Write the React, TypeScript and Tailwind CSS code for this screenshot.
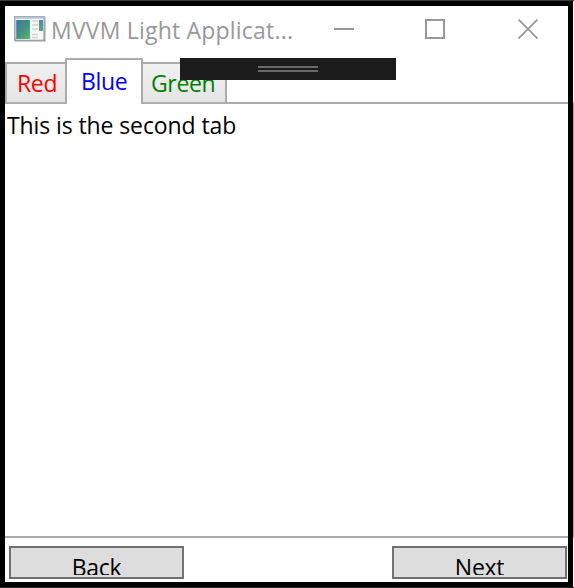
import React from 'react';

function AppIcon() {
  return (
    <svg width="32" height="26" viewBox="0 0 32 26" className="shrink-0">
      <defs>
        <linearGradient id="pane" x1="0" y1="0" x2="1" y2="1">
          <stop offset="0" stopColor="#4377a8" />
          <stop offset="0.5" stopColor="#439082" />
          <stop offset="1" stopColor="#5fb866" />
        </linearGradient>
        <linearGradient id="side" x1="0" y1="0" x2="0" y2="1">
          <stop offset="0" stopColor="#4c84bd" />
          <stop offset="1" stopColor="#5aac74" />
        </linearGradient>
        <linearGradient id="frame" x1="0" y1="0" x2="0" y2="1">
          <stop offset="0" stopColor="#a3b0bf" />
          <stop offset="1" stopColor="#9ba1a6" />
        </linearGradient>
      </defs>
      <rect x="0.75" y="0.75" width="29.5" height="23.5" fill="#e2e6ea" stroke="url(#frame)" strokeWidth="1.5" />
      <rect x="1" y="1" width="29.5" height="1.6" fill="#b9c4d2" />
      <rect x="2" y="3" width="27" height="20.5" fill="#f6f7f8" />
      <rect x="2.2" y="4" width="13.8" height="19" fill="url(#pane)" />
      <path d="M18 5h6M18 9h6M18 13h6M18 18.5h6M18 21.5h6" stroke="#cfd3d7" strokeWidth="1.7" />
      <rect x="25" y="4" width="4" height="11" fill="url(#side)" />
      <path d="M1 25.5h31M31.5 1v25" stroke="#cfcfcf" />
    </svg>
  );
}

function TitleBar() {
  return (
    <header className="flex h-[52px] shrink-0 items-start pl-[9px] pt-[10px] text-[#999999]">
      <AppIcon />
      <h1 className="-mt-px ml-[5px] w-[260px] whitespace-nowrap text-[23px] leading-[30px] tracking-[0.2px]">MVVM Light Applicat...</h1>
      <div className="ml-[23px] mt-[3px] flex gap-[71px]">
        <svg width="20" height="20" className="block">
          <path d="M0 10h20" stroke="currentColor" strokeWidth="2" />
        </svg>
        <svg width="20" height="20" className="block">
          <path d="M1 1h18v18H1z" fill="none" stroke="currentColor" strokeWidth="2" />
        </svg>
        <svg width="20" height="20" className="ml-[2px] block">
          <path d="M.5.5l19 19M19.5.5l-19 19" stroke="currentColor" strokeWidth="1.8" />
        </svg>
      </div>
    </header>
  );
}

function DebugBar() {
  return (
    <div className="absolute left-[175px] top-[52px] z-20 flex h-[22px] w-[216px] flex-col items-center gap-[2px] bg-[#1b1b1b] pt-[8px]">
      <span className="h-[2px] w-[60px] bg-[#686868]" />
      <span className="h-[2px] w-[60px] bg-[#686868]" />
    </div>
  );
}

const tab = 'border-2 border-[#acacac] text-[23px] leading-[30px] whitespace-nowrap tracking-[-0.35px]';
const idle = 'h-[42px] bg-linear-to-b from-[#f0f0f0] to-[#e5e5e5] pt-[4px]';

function Tabs() {
  return (
    <nav className="flex h-[46px] shrink-0 items-end bg-[linear-gradient(#acacac,#acacac)] bg-[length:100%_2px] bg-bottom bg-no-repeat">
      <div className={`${tab} ${idle} w-[62px] pl-[10px] text-[#ff0000]`}>Red</div>
      <div className={`${tab} z-10 -mx-[2px] h-[46px] w-[78px] border-b-0 bg-white pl-[14px] pt-[6px] text-[#0000ff]`}>Blue</div>
      <div className={`${tab} ${idle} w-[86px] pl-[8px] text-[#008000]`}>Green</div>
    </nav>
  );
}

function Button({ label }: { label: string }) {
  return (
    <button className="flex h-[33px] w-[175px] justify-center border-2 border-[#707070] bg-[#dddddd] pt-[4px] text-[23px] leading-[30px] tracking-[-0.3px]">
      <span className="h-[23px] overflow-hidden">{label}</span>
    </button>
  );
}

export default function App() {
  return (
    <div className="flex h-[588px] w-[574px] bg-white font-['Open_Sans','Noto_Sans',sans-serif] text-black">
      <div className="relative flex w-[573px] flex-col border-x-[5px] border-b-[6px] border-t-[6px] border-black bg-white">
        <div className="absolute -left-[5px] -top-[6px] h-px w-[574px] bg-[#3c3c3c]" />
        <div className="absolute -bottom-[6px] -left-[5px] h-px w-[574px] bg-[#222222]" />
        <TitleBar />
        <DebugBar />
        <Tabs />
        <main className="flex-1 pl-[2px] pt-[6px] text-[23px] leading-[30px] tracking-[-0.1px]">This is the second tab</main>
        <footer className="flex h-[46px] shrink-0 items-start justify-between border-t-2 border-[#acacac] pl-[4px] pr-px pt-[8px]">
          <Button label="Back" />
          <Button label="Next" />
        </footer>
      </div>
      <div className="mt-[102px] h-[436px] w-px bg-[#acacac]" />
    </div>
  );
}
